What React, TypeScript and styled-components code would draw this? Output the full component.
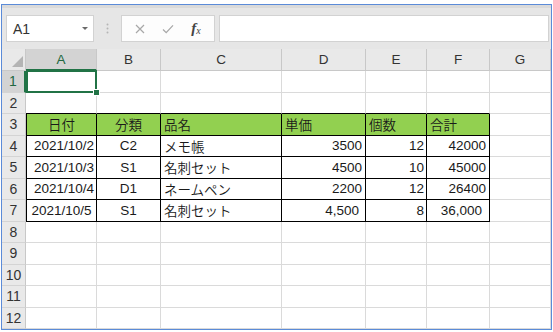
import styled, { createGlobalStyle } from "styled-components";

const GlobalStyle = createGlobalStyle`
  html, body {
    margin: 0;
    padding: 0;
    background: #fff;
  }
  body {
    font-family: "Liberation Sans", "Noto Sans CJK JP", sans-serif;
  }
`;

const Frame = styled.div`
  margin: 4px 0 0 1px;
  width: 551px;
  height: 326px;
  box-sizing: border-box;
  border: 1px solid #5b8bd8;
  display: flex;
  flex-direction: column;
  overflow: hidden;
`;

const Toolbar = styled.div`
  height: 44px;
  flex: none;
  box-sizing: border-box;
  background: linear-gradient(#dadada 0 3px, #e6e6e6 3px);
  display: flex;
  align-items: flex-start;
  padding: 10px 2px 0 4px;
`;

const NameBox = styled.div`
  width: 88px;
  height: 27px;
  box-sizing: border-box;
  background: #fff;
  border: 1px solid #d2d2d2;
  display: flex;
  align-items: center;
  justify-content: space-between;
  padding: 0 5px 0 6px;
  font-size: 14px;
  color: #333;
`;

const DropArrow = styled.span`
  width: 0;
  height: 0;
  border-left: 3px solid transparent;
  border-right: 3px solid transparent;
  border-top: 3px solid #6a6a6a;
`;

const Grip = styled.div`
  width: 27px;
  height: 27px;
  display: flex;
  align-items: center;
  justify-content: center;
`;

const ButtonGroup = styled.div`
  width: 94px;
  height: 27px;
  box-sizing: border-box;
  background: #fdfdfd;
  border: 1px solid #d2d2d2;
  display: flex;
  align-items: center;
  justify-content: space-around;
  padding: 0 4px;
`;

const IconButton = styled.span`
  width: 24px;
  height: 20px;
  display: flex;
  align-items: center;
  justify-content: center;
`;

const Fx = styled.span`
  font-family: "Liberation Serif", serif;
  font-style: italic;
  font-size: 15px;
  color: #444;
  i {
    font-weight: bold;
  }
  sub {
    font-size: 10px;
    vertical-align: -1px;
  }
`;

const FormulaInput = styled.div`
  flex: 1;
  margin-left: 4px;
  height: 27px;
  box-sizing: border-box;
  background: #fff;
  border: 1px solid #d2d2d2;
`;

const Sheet = styled.div`
  display: grid;
  grid-template-columns: 24px 71px 64px 121px 84px 61px 63px 1fr;
  grid-template-rows: 22px;
  grid-auto-rows: 21.5px;
`;

const Corner = styled.div`
  background: #e9e9e9;
  border-right: 1px solid #c8c8c8;
  border-bottom: 1px solid #c8c8c8;
  display: flex;
  align-items: flex-end;
  justify-content: flex-end;
  padding: 0 2px 3px 0;
`;

const ColHeader = styled.div<{ $active?: boolean }>`
  box-sizing: border-box;
  background: ${(p) => (p.$active ? "#d3d3d3" : "#e9e9e9")};
  color: ${(p) => (p.$active ? "#22683f" : "#333")};
  border-right: 1px solid #c8c8c8;
  border-bottom: ${(p) => (p.$active ? "2px solid #217346" : "1px solid #c8c8c8")};
  display: flex;
  align-items: center;
  justify-content: center;
  font-size: 13.5px;
`;

const RowHeader = styled.div<{ $active?: boolean }>`
  box-sizing: border-box;
  background: ${(p) => (p.$active ? "#d3d3d3" : "#e9e9e9")};
  color: ${(p) => (p.$active ? "#22683f" : "#333")};
  border-right: ${(p) => (p.$active ? "2px solid #217346" : "1px solid #c8c8c8")};
  border-bottom: 1px solid #d4d4d4;
  display: flex;
  align-items: center;
  justify-content: center;
  font-size: 14px;
`;

const Cell = styled.div<{
  $align?: "left" | "center" | "right";
  $pad?: number;
  $boxed?: boolean;
  $boxBelow?: boolean;
  $edgeLeft?: boolean;
  $fill?: string;
  $selected?: boolean;
}>`
  position: relative;
  box-sizing: border-box;
  background: ${(p) => p.$fill ?? "#fff"};
  border-right: 1px solid ${(p) => (p.$boxed ? "#000" : "#dadada")};
  border-bottom: 1px solid ${(p) => (p.$boxed || p.$boxBelow ? "#000" : "#dadada")};
  box-shadow: ${(p) => (p.$edgeLeft ? "inset 1px 0 0 #000" : "none")};
  display: flex;
  align-items: center;
  justify-content: ${(p) =>
    p.$align === "center" ? "center" : p.$align === "right" ? "flex-end" : "flex-start"};
  padding: 0 ${(p) => p.$pad ?? 3}px 0 ${(p) => (p.$edgeLeft ? 4 : 3)}px;
  font-size: 13.5px;
  font-weight: 350;
  color: #1a1a1a;
  white-space: nowrap;
  z-index: ${(p) => (p.$selected ? 2 : "auto")};

  ${(p) =>
    p.$selected &&
    `
    &::after {
      content: "";
      position: absolute;
      top: -1px;
      left: 0;
      right: -1px;
      bottom: -1px;
      border: 2px solid #217346;
    }
  `}
`;

const FillHandle = styled.span`
  position: absolute;
  right: -4px;
  bottom: -4px;
  width: 5px;
  height: 5px;
  background: #217346;
  border: 1px solid #fff;
  z-index: 3;
`;

type Align = "left" | "center" | "right";
type CellSpec = { text: string; align?: Align; pad?: number };

const columns = ["A", "B", "C", "D", "E", "F", "G"];

const tableRows: CellSpec[][] = [
  [
    { text: "日付", align: "center" },
    { text: "分類", align: "center" },
    { text: "品名" },
    { text: "単価" },
    { text: "個数" },
    { text: "合計" },
  ],
  [
    { text: "2021/10/2", align: "right", pad: 2 },
    { text: "C2", align: "center" },
    { text: "メモ帳" },
    { text: "3500", align: "right" },
    { text: "12", align: "right", pad: 2 },
    { text: "42000", align: "right" },
  ],
  [
    { text: "2021/10/3", align: "right", pad: 2 },
    { text: "S1", align: "center" },
    { text: "名刺セット" },
    { text: "4500", align: "right" },
    { text: "10", align: "right", pad: 2 },
    { text: "45000", align: "right" },
  ],
  [
    { text: "2021/10/4", align: "right", pad: 2 },
    { text: "D1", align: "center" },
    { text: "ネームペン" },
    { text: "2200", align: "right" },
    { text: "12", align: "right", pad: 2 },
    { text: "26400", align: "right" },
  ],
  [
    { text: "2021/10/5", align: "center" },
    { text: "S1", align: "center" },
    { text: "名刺セット" },
    { text: "4,500", align: "right", pad: 6 },
    { text: "8", align: "right", pad: 2 },
    { text: "36,000", align: "right", pad: 7 },
  ],
];

const rowNumbers = Array.from({ length: 12 }, (_, i) => i + 1);

export default function App() {
  return (
    <>
      <GlobalStyle />
      <Frame>
        <Toolbar>
          <NameBox>
            A1
            <DropArrow />
          </NameBox>
          <Grip>
            <svg width="3" height="11" viewBox="0 0 3 11">
              <circle cx="1.5" cy="1.5" r="1" fill="#b5b5b5" />
              <circle cx="1.5" cy="5.5" r="1" fill="#b5b5b5" />
              <circle cx="1.5" cy="9.5" r="1" fill="#b5b5b5" />
            </svg>
          </Grip>
          <ButtonGroup>
            <IconButton>
              <svg width="10" height="10" viewBox="0 0 10 10">
                <path d="M1 1L9 9M9 1L1 9" stroke="#a8a8a8" strokeWidth="1.2" />
              </svg>
            </IconButton>
            <IconButton>
              <svg width="12" height="10" viewBox="0 0 12 10">
                <path d="M1 5.5L4.2 8.6L11 1.4" stroke="#a8a8a8" strokeWidth="1.3" fill="none" />
              </svg>
            </IconButton>
            <IconButton>
              <Fx>
                <i>f</i>
                <sub>x</sub>
              </Fx>
            </IconButton>
          </ButtonGroup>
          <FormulaInput />
        </Toolbar>

        <Sheet>
          <Corner>
            <svg width="11" height="11" viewBox="0 0 11 11">
              <path d="M11 0V11H0Z" fill="#b4b4b4" />
            </svg>
          </Corner>
          {columns.map((c) => (
            <ColHeader key={c} $active={c === "A"}>
              {c}
            </ColHeader>
          ))}

          {rowNumbers.map((r) => (
            <Row key={r} r={r} />
          ))}
        </Sheet>
      </Frame>
    </>
  );
}

function Row({ r }: { r: number }) {
  const data = r >= 3 && r <= 7 ? tableRows[r - 3] : null;
  return (
    <>
      <RowHeader $active={r === 1}>{r}</RowHeader>
      {columns.map((c, i) => {
        const spec = data && i < 6 ? data[i] : null;
        const inTable = spec !== null;
        return (
          <Cell
            key={c}
            $align={spec?.align}
            $pad={spec?.pad}
            $boxed={inTable}
            $boxBelow={r === 2 && i < 6}
            $edgeLeft={inTable && i === 0}
            $fill={r === 3 && inTable ? "#92d050" : undefined}
            $selected={r === 1 && i === 0}
          >
            {spec?.text}
            {r === 1 && i === 0 ? <FillHandle /> : null}
          </Cell>
        );
      })}
    </>
  );
}
